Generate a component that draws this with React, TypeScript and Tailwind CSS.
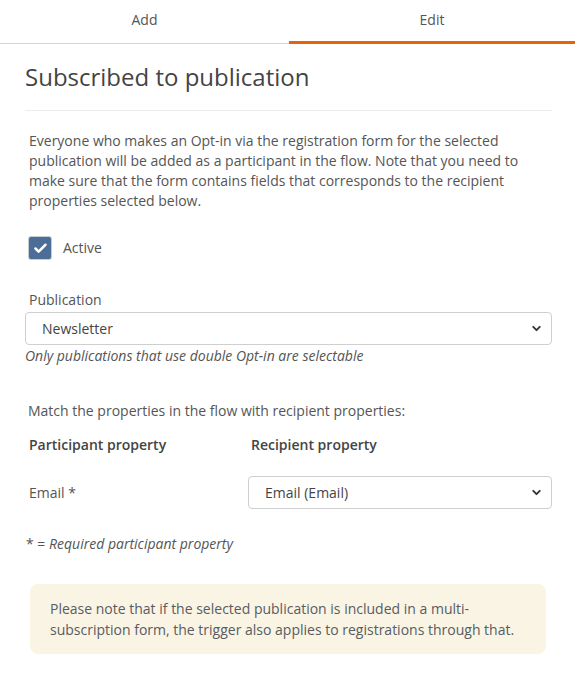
import { Check, ChevronDown } from 'lucide-react'

const font = { fontFamily: '"Open Sans", "Noto Sans", sans-serif' }

function Select({ value }: { value: string }) {
  return (
    <div className="flex items-center justify-between h-[33px] pl-[16px] pr-[8px] border border-[#cfcfcf] rounded-[4px] bg-white text-[14px] text-[#444]">
      <span>{value}</span>
      <ChevronDown className="w-[13px] h-[13px] text-[#333]" strokeWidth={3.5} />
    </div>
  )
}

export default function App() {
  return (
    <div className="w-[575px] h-[677px] bg-white text-[#555] text-[14px] leading-[20px]" style={font}>
      {/* Tabs */}
      <div className="flex h-[44px]">
        <div className="w-[289px] flex items-center justify-center border-b border-[#d4d4d4] text-[#555] pb-[4px]">Add</div>
        <div className="flex-1 flex items-center justify-center border-b-[3px] border-[#e8620a] text-[#555] pb-[2px]">Edit</div>
      </div>

      <div className="pl-[25px] pr-[23px]">
        <h1 className="pt-[18px] pb-[18px] text-[24px] leading-[30px] text-[#444] border-b border-[#ececec]">
          Subscribed to publication
        </h1>

        <p className="mt-[20px] pl-[4px] pr-[20px]">
          Everyone who makes an Opt-in via the registration form for the selected publication will be added as a participant in the flow. Note that you need to make sure that the form contains fields that corresponds to the recipient properties selected below.
        </p>

        <div className="flex items-center mt-[25px] pl-[3px]">
          <div className="w-[24px] h-[24px] rounded-[3px] bg-[#4c6d96] border border-[#c8ced6] flex items-center justify-center">
            <Check className="w-[15px] h-[15px] text-white" strokeWidth={4} />
          </div>
          <span className="ml-[11px]">Active</span>
        </div>

        <div className="mt-[30px] pl-[4px]">Publication</div>
        <div className="mt-[2px]">
          <Select value="Newsletter" />
        </div>
        <div className="mt-[1px] italic">Only publications that use double Opt-in are selectable</div>

        <div className="mt-[35px] pl-[3px]">Match the properties in the flow with recipient properties:</div>

        <div className="flex mt-[14px] pl-[4px] font-semibold text-[#444]">
          <div className="w-[222px]">Participant property</div>
          <div>Recipient property</div>
        </div>

        <div className="flex items-center mt-[21px]">
          <div className="w-[223px] pl-[4px]">Email *</div>
          <div className="flex-1">
            <Select value="Email (Email)" />
          </div>
        </div>

        <div className="mt-[25px] pl-[1px]">
          * = <span className="italic">Required participant property</span>
        </div>

        <div className="mt-[30px] ml-[5px] mr-[6px] bg-[#faf4e4] rounded-[8px] pl-[20px] pr-[20px] pt-[14px] pb-[14px] leading-[21px] text-[#585c63]">
          Please note that if the selected publication is included in a multi-subscription form, the trigger also applies to registrations through that.
        </div>
      </div>
    </div>
  )
}
